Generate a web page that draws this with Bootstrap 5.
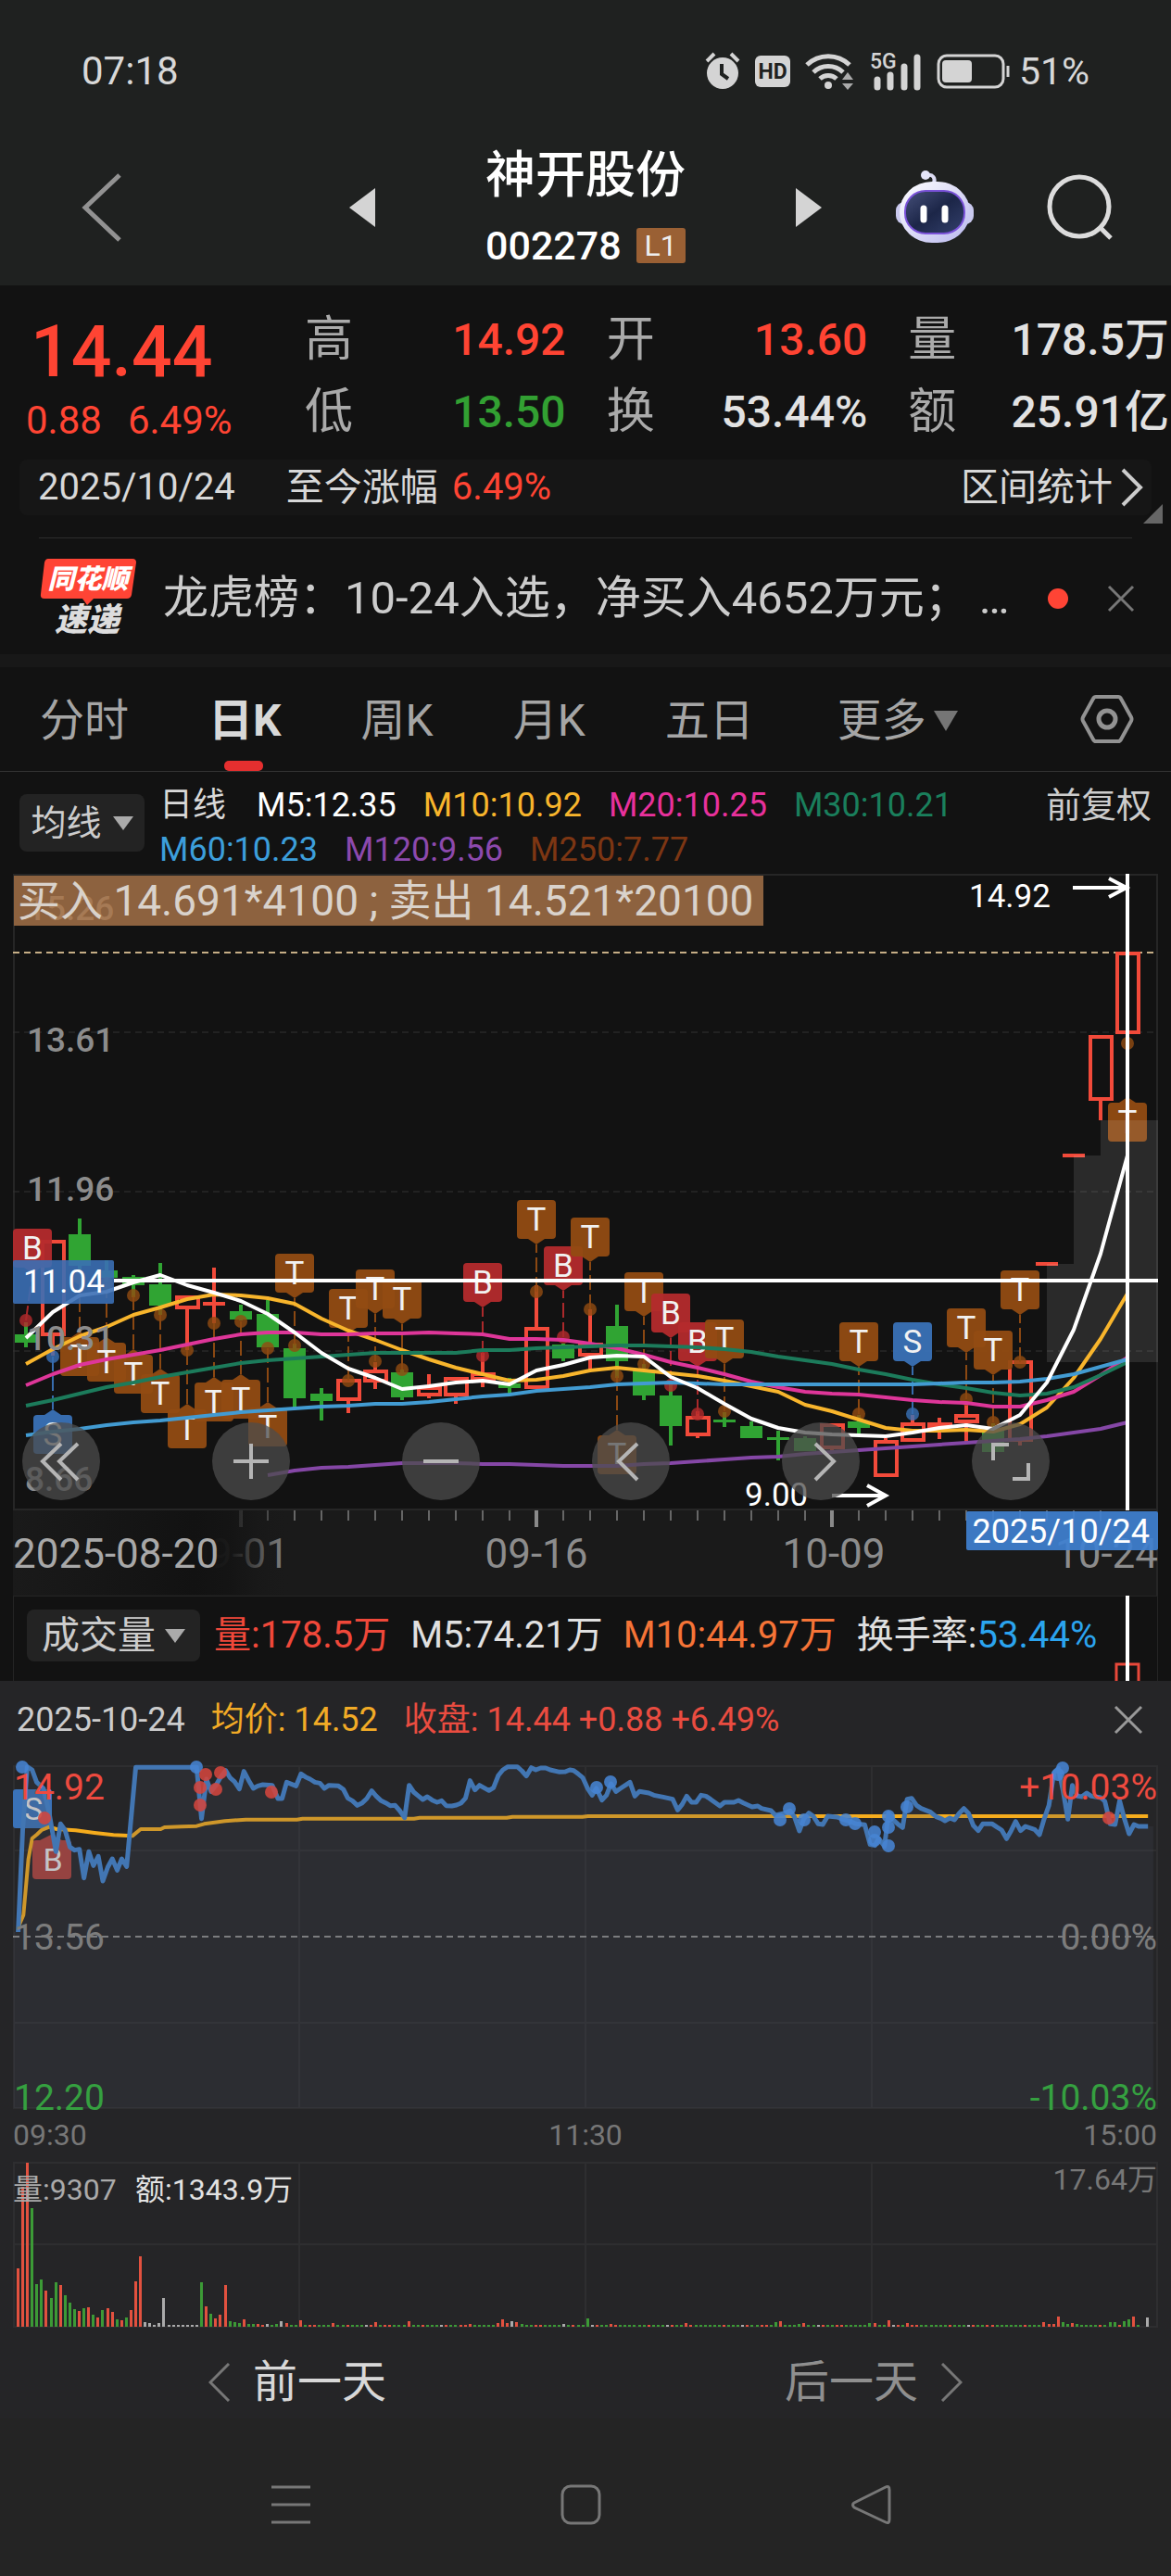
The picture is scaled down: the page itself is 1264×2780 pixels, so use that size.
<!DOCTYPE html>
<html lang="zh-CN" data-bs-theme="dark">
<head>
<meta charset="utf-8">
<meta name="viewport" content="width=device-width, initial-scale=1">
<title>神开股份 002278</title>
<link href="https://cdn.jsdelivr.net/npm/bootstrap@5.3.0/dist/css/bootstrap.min.css" rel="stylesheet">
<style>
body{background:#121212;color:#d8d8d8;font-family:Roboto,"Noto Sans CJK SC",sans-serif;overflow-x:hidden}
button{background:none;border:0;padding:0;color:inherit;font:inherit}
svg{display:block;flex:none}
svg text{font-family:Roboto,"Noto Sans CJK SC",sans-serif}
.up{color:#ff4433}.down{color:#32a032}
.top-area{background:#1f2120;padding-bottom:18px}
.status-row{padding:52px 88px 0;font-size:42px;line-height:50px;margin-bottom:56px}
.status-icons{gap:16px}
.battery-text{margin-left:-7px;font-size:41px}
.title-row{display:grid;grid-template-columns:1fr 510px 1fr}
.side-back{padding-left:88px}
.side-tools{padding:0 62px 0 79px}
.stock-name{font-size:54px;line-height:64px;margin-bottom:18px;color:#fff;font-weight:500}
.stock-code{font-size:43px;line-height:50px;color:#fff;font-weight:500}
.level-tag{background:#9a6034;font-size:32px;line-height:38px;width:53px;border-radius:3px;color:#eee;font-weight:400}
.price-box{width:329px;padding-top:8px}
.price-now{font-size:77px;line-height:88px;font-weight:500;padding-left:33px}
.price-chg{font-size:42px;line-height:60px;padding-left:28px}
.quote-area{padding-top:20px}
.quote-grid{display:grid;grid-template-columns:repeat(3,1fr);column-gap:44px;font-size:48px;line-height:77px;padding-right:2px;color:#e2e2e2;font-weight:500}
.quote-grid dt{font-weight:400;color:#aaa;font-size:52px}
.range-bar{margin:12px 21px 0;padding:0 8px 0 20px;background:#161616;border-radius:8px;font-size:40px;line-height:60px}
.range-bar .zh{font-size:41px}
.range-label{margin:0 15px 0 55px}
.corner{right:9px;bottom:-9px}
.hair{margin:24px 42px 0;border-top:1px solid #2d2d2d}
.news-row{padding:4px 39px 0 42px;height:125px}
.news-text{font-size:49px;line-height:60px;color:#ccc}
.news-close{margin-left:42px}
.strip{height:14px;background:#181818}
.tabs{height:113px;padding:0 40px 0 43px;border-bottom:1px solid #333;font-size:48px;line-height:60px;color:#a5a5a5}
.tabs a{color:inherit;text-decoration:none}
.tab-list{gap:86px;padding-top:4px}
.tab-on{color:#d8d8d8!important;font-weight:700}
.tab-on::after{content:"";position:absolute;left:17px;bottom:-24px;width:42px;height:11px;border-radius:5px;background:#e52f2f}
.legend-area{height:109px;padding:12px 21px 0}
.chip{background:#232323;border-radius:8px;color:#ccc}
.chip-ma{width:135px;height:62px;margin-top:12px;font-size:38px;gap:12px}
.legend-list{font-size:36px;line-height:48px;column-gap:29px;margin-left:16px;width:864px}
.c5{color:#fff}.c10{color:#f8b52c}.c20{color:#e8319c}.c30{color:#1a7f5c}.c60{color:#3c9edb}.c120{color:#8c49ad}.c250{color:#7d3613}
.adj{font-size:38px;line-height:48px;color:#ccc}
.tools{left:24px;right:131px;top:593px}
.tool{width:84px;height:84px;border-radius:50%;background:rgba(76,76,76,.75)}
.vol-head{margin:0 14px;border:solid #242424;border-width:1px 1px 0;height:92px;padding:14px 0 0 14px;font-size:40px;line-height:56px;color:#e0e0e0}
.vol-head .chip{width:187px;height:56px;font-size:41px;gap:10px;margin-right:15px}
.vol-vals{gap:22px}
.vol-cross{right:18px;top:-1px}
.sheet{background:#252527}
.sheet-head{height:76px;padding:8px 30px 0 18px;font-size:36px;column-gap:28px;color:#ccc}
.day-row{height:80px;font-size:48px;padding:2px 225px 0}
.day-row button{gap:24px}
.sys-nav{padding:68px 168px 52px 157px;background:#242424}
.sys-nav button{flex:1;height:50px}
</style>
</head>
<body>
<header class="top-area">
  <div class="status-row d-flex justify-content-between align-items-center">
    <span>07:18</span>
    <div class="status-icons d-flex align-items-center">
      <svg width="38" height="42" viewBox="0 0 38 42"><circle cx="19" cy="23" r="17" fill="#d4d4d4"/><path d="M2 10l8-8M36 10l-8-8" stroke="#d4d4d4" stroke-width="4"/><path d="M18 13v11l7 5" fill="none" stroke="#1f2120" stroke-width="4"/></svg>
      <svg width="38" height="34" viewBox="0 0 38 34"><rect width="38" height="34" rx="6" fill="#d4d4d4"/><text x="19" y="25" font-size="23" font-weight="700" text-anchor="middle" fill="#1f2120">HD</text></svg>
      <svg width="54" height="42" viewBox="0 0 54 42"><g fill="none" stroke="#d4d4d4" stroke-width="5"><path d="M2 14a33 33 0 0 1 46 0"/><path d="M9 22a23 23 0 0 1 32 0"/><path d="M16 29a13 13 0 0 1 18 0"/></g><circle cx="25" cy="36" r="4" fill="#d4d4d4"/><path d="M40 30l6-8 6 8zM40 34l6 7 6-7z" fill="#aaa"/></svg>
      <svg width="56" height="42" viewBox="0 0 56 42"><text x="0" y="18" font-size="23" font-weight="500" fill="#d4d4d4">5G</text><path d="M8 38V30M22 38V25M37 38V16M51 38V6" stroke="#d4d4d4" stroke-width="7" stroke-linecap="round"/></svg>
      <svg width="80" height="38" viewBox="0 0 80 38"><rect x="2" y="2" width="70" height="34" rx="9" fill="none" stroke="#d4d4d4" stroke-width="3"/><rect x="6" y="7" width="32" height="24" rx="4" fill="#d4d4d4"/><path d="M77 13v12" stroke="#d4d4d4" stroke-width="3"/></svg>
      <span class="battery-text">51%</span>
    </div>
  </div>
  <div class="title-row align-items-center">
    <div class="side-back"><button class="d-block" aria-label="返回"><svg width="46" height="76" viewBox="0 0 46 76"><path d="M41 3L4 38l37 35" fill="none" stroke="#929292" stroke-width="5"/></svg></button></div>
    <div class="d-flex justify-content-between align-items-center">
      <button aria-label="上一只"><svg width="28" height="42"><path d="M28 0v42L0 21z" fill="#d4d4d4"/></svg></button>
      <div>
        <div class="stock-name">神开股份</div>
        <div class="d-flex align-items-center gap-3"><span class="stock-code">002278</span><span class="level-tag text-center">L1</span></div>
      </div>
      <button aria-label="下一只"><svg width="28" height="42"><path d="M0 0v42l28-21z" fill="#d4d4d4"/></svg></button>
    </div>
    <div class="side-tools d-flex justify-content-between align-items-center">
      <button aria-label="智能助手"><svg width="86" height="80" viewBox="0 0 86 80">
        <defs><linearGradient id="rb" x1="0" y1="0" x2="1" y2="1"><stop offset="0" stop-color="#fff"/><stop offset="1" stop-color="#b9b8ee"/></linearGradient><linearGradient id="rf" x1="0" y1="0" x2="1" y2="1"><stop offset="0" stop-color="#46507a"/><stop offset=".5" stop-color="#1c2648"/><stop offset="1" stop-color="#33406c"/></linearGradient></defs>
        <path d="M42 14c2-6-1-10-7-9" fill="none" stroke="#dcdcf4" stroke-width="4"/><circle cx="33" cy="5" r="5" fill="#e4e4f8"/>
        <rect x="1" y="34" width="84" height="24" rx="9" fill="#c9c9ee"/>
        <rect x="5" y="12" width="76" height="66" rx="35" fill="url(#rb)"/>
        <rect x="11" y="22" width="64" height="46" rx="22" fill="url(#rf)" stroke="#7a52d8" stroke-width="2"/>
        <path d="M31 41v12M54 41v12" stroke="#fff" stroke-width="7" stroke-linecap="round"/></svg></button>
      <button aria-label="搜索"><svg width="72" height="72" viewBox="0 0 72 72"><circle cx="35" cy="35" r="32" fill="none" stroke="#dcdcdc" stroke-width="5"/><path d="M57 57l12 12" stroke="#dcdcdc" stroke-width="5"/></svg></button>
    </div>
  </div>
</header>

<section class="quote-area">
  <div class="d-flex">
    <div class="price-box up flex-shrink-0">
      <div class="price-now">14.44</div>
      <div class="price-chg d-flex"><span class="me-4">0.88</span><span class="ms-1">6.49%</span></div>
    </div>
    <dl class="quote-grid flex-fill mb-0">
      <div class="d-flex justify-content-between"><dt>高</dt><dd class="mb-0 up">14.92</dd></div>
      <div class="d-flex justify-content-between"><dt>开</dt><dd class="mb-0 up">13.60</dd></div>
      <div class="d-flex justify-content-between"><dt>量</dt><dd class="mb-0">178.5万</dd></div>
      <div class="d-flex justify-content-between"><dt>低</dt><dd class="mb-0 down">13.50</dd></div>
      <div class="d-flex justify-content-between"><dt>换</dt><dd class="mb-0">53.44%</dd></div>
      <div class="d-flex justify-content-between"><dt>额</dt><dd class="mb-0">25.91亿</dd></div>
    </dl>
  </div>
  <div class="position-relative">
    <div class="range-bar d-flex align-items-center">
      <span>2025/10/24</span><span class="zh range-label">至今涨幅</span><span class="up">6.49%</span>
      <button class="zh ms-auto d-flex align-items-center gap-2">区间统计<svg width="26" height="42" viewBox="0 0 26 42"><path d="M3 2l19 19L3 40" fill="none" stroke="#ccc" stroke-width="4"/></svg></button>
    </div>
    <svg class="corner position-absolute" width="21" height="21"><path d="M21 0v21H0z" fill="#666"/></svg>
  </div>
  <div class="hair"></div>
  <div class="news-row d-flex align-items-center">
    <svg width="106" height="92" viewBox="0 0 106 92"><path d="M10 3h91q4 0 4 4l-5 35q-1 4-5 4H59l-7 7-5-7H6q-5 0-4-5L6 7q1-4 4-4z" fill="#ff4435"/><text x="53" y="35" font-size="29" font-weight="900" font-style="italic" fill="#fff" text-anchor="middle">同花顺</text><text x="52" y="81" font-size="35" font-weight="900" font-style="italic" fill="#ddd" text-anchor="middle">速递</text></svg>
    <span class="news-text text-nowrap ms-4 flex-fill ps-1">龙虎榜：10-24入选，净买入4652万元；&thinsp;…</span>
    <svg width="22" height="22"><circle cx="11" cy="11" r="11" fill="#ff4435"/></svg>
    <button aria-label="关闭" class="news-close"><svg width="30" height="30"><path d="M2 2l26 26M28 2L2 28" stroke="#777" stroke-width="3"/></svg></button>
  </div>
</section>
<div class="strip"></div>

<nav class="tabs d-flex justify-content-between align-items-center">
  <div class="tab-list d-flex">
    <a href="#">分时</a><a href="#" class="tab-on position-relative">日K</a><a href="#">周K</a><a href="#">月K</a><a href="#">五日</a>
    <a href="#" class="d-flex align-items-center gap-2 ms-1">更多<svg width="26" height="22"><path d="M0 0h26L13 22z" fill="#757575"/></svg></a>
  </div>
  <button aria-label="设置"><svg width="58" height="54" viewBox="0 0 58 54"><path d="M17 3h24q2 0 3 2l11 20q1 2 0 4L44 49q-1 2-3 2H17q-2 0-3-2L3 29q-1-2 0-4L14 5q1-2 3-2z" fill="none" stroke="#929292" stroke-width="4"/><circle cx="29" cy="27" r="9" fill="none" stroke="#929292" stroke-width="5"/></svg></button>
</nav>

<section>
  <div class="legend-area d-flex align-items-start">
    <button class="chip chip-ma d-flex align-items-center justify-content-center flex-shrink-0">均线<svg width="22" height="15"><path d="M0 0h22L11 15z" fill="#aaa"/></svg></button>
    <div class="legend-list d-flex flex-wrap">
      <span class="me-1">日线</span><span class="c5">M5:12.35</span><span class="c10">M10:10.92</span><span class="c20">M20:10.25</span><span class="c30">M30:10.21</span><span class="c60">M60:10.23</span><span class="c120">M120:9.56</span><span class="c250">M250:7.77</span>
    </div>
    <button class="adj ms-auto">前复权</button>
  </div>
  <div class="position-relative">
    <svg id="kline" width="100%" viewBox="0 942 1264 780">
      <defs><linearGradient id="fade"><stop offset="0" stop-color="#1a1a1a"/><stop offset=".65" stop-color="#121212"/><stop offset=".78" stop-color="#141414" stop-opacity=".95"/><stop offset="1" stop-color="#1a1a1a" stop-opacity="0"/></linearGradient></defs>
      <rect x="14" y="1629" width="1236" height="93" fill="#1a1a1a"/>
      <path d="M14 944H1250M15 944V1629M1249 944V1722M14 1629H1250" stroke="#262626" stroke-width="2" fill="none"/>
      <path d="M14 1114H1250M14 1286H1250M14 1458H1250" stroke="#333" stroke-dasharray="7 5"/>
      <path d="M14 1028H1245" stroke="#c6ae86" stroke-width="2" stroke-dasharray="7 5"/>
      <g id="candles"></g>
      <g id="marks"></g>
      <path d="M1130 1470V1364H1159V1247H1188V1209H1250V1470Z" fill="#fff" fill-opacity=".1"/>
      <g id="mas" fill="none" stroke-width="4" stroke-linejoin="round"></g>
      <g font-size="37" fill="#8c8c8c" font-weight="500"><text x="29" y="1135">13.61</text><text x="29" y="1296">11.96</text><text x="29" y="1457">10.31</text><text x="27" y="1609">8.66</text></g>
      <rect x="15" y="945" width="809" height="54" fill="#8d623f"/>
      <text x="29" y="993" font-size="37" font-weight="500" fill="#a67a55">15.26</text>
      <text x="19" y="988" font-size="46" fill="#d9d2cb">买入 14.691*4100 ; 卖出 14.521*20100</text>
      <path d="M123 1382H1250" stroke="#fff" stroke-width="4"/>
      <path d="M1217 943V1630" stroke="#fff" stroke-width="4"/>
      <rect x="14" y="1360" width="109" height="47" rx="2" fill="#3b6fb5" fill-opacity=".9"/>
      <g font-size="35" fill="#fff"><text x="25" y="1395">11.04</text><text x="1046" y="979">14.92</text><text x="804" y="1625">9.00</text></g>
      <path d="M1158 958H1215M1197 948l19 10-19 10M898 1614H956M936 1603l20 11-20 11" stroke="#fff" stroke-width="4" fill="none"/>
      <g id="ticks"></g>
      <g font-size="44" fill="#8c8c8c"><text x="312" y="1692" text-anchor="end">09-01</text><text x="579" y="1692" text-anchor="middle">09-16</text><text x="900" y="1692" text-anchor="middle">10-09</text><text x="1250" y="1692" text-anchor="end">10-24</text></g>
      <rect x="15" y="1630" width="300" height="91" fill="url(#fade)"/>
      <text x="14" y="1692" font-size="44" fill="#a8a8a8">2025-08-20</text>
      <rect x="1043" y="1631" width="207" height="42" rx="2" fill="#4080d0" fill-opacity=".93"/>
      <text x="1241" y="1665" font-size="36" fill="#fff" text-anchor="end">2025/10/24</text>
    </svg>
    <div class="tools position-absolute d-flex justify-content-between">
      <button class="tool" aria-label="最左"><svg width="84" height="84"><path d="M42 23L22 42l20 20M60 23L40 42l20 20" fill="none" stroke="#b5b5b5" stroke-width="4"/></svg></button>
      <button class="tool" aria-label="放大"><svg width="84" height="84"><path d="M42 23v38M23 42h38" stroke="#b5b5b5" stroke-width="4"/></svg></button>
      <button class="tool" aria-label="缩小"><svg width="84" height="84"><path d="M23 42h38" stroke="#b5b5b5" stroke-width="4"/></svg></button>
      <button class="tool" aria-label="左移"><svg width="84" height="84"><path d="M49 23L29 42l20 20" fill="none" stroke="#b5b5b5" stroke-width="4"/></svg></button>
      <button class="tool" aria-label="右移"><svg width="84" height="84"><path d="M36 23l20 19-20 20" fill="none" stroke="#b5b5b5" stroke-width="4"/></svg></button>
      <button class="tool" aria-label="全屏"><svg width="84" height="84"><path d="M40 24H23v17M44 61h17V44" fill="none" stroke="#b5b5b5" stroke-width="4"/></svg></button>
    </div>
  </div>
  <div class="vol-head position-relative d-flex align-items-start">
    <button class="chip d-flex align-items-center justify-content-center flex-shrink-0">成交量<svg width="22" height="15"><path d="M0 0h22L11 15z" fill="#aaa"/></svg></button>
    <div class="vol-vals d-flex text-nowrap"><span style="color:#f0483a">量:178.5万</span><span>M5:74.21万</span><span style="color:#f67437">M10:44.97万</span><span>换手率:<span style="color:#2ba4ef">53.44%</span></span></div>
    <svg class="vol-cross position-absolute" width="28" height="92"><path d="M2 92V74h24v18" fill="none" stroke="#e8483a" stroke-width="3"/><path d="M14 0v92" stroke="#fff" stroke-width="4"/></svg>
  </div>
</section>

<section class="sheet">
  <div class="sheet-head d-flex align-items-center">
    <span>2025-10-24</span><span style="color:#f2ab26">均价: 14.52</span><span style="color:#ea4c40">收盘: 14.44 +0.88 +6.49%</span>
    <button class="ms-auto" aria-label="关闭"><svg width="32" height="32"><path d="M2 2l28 28M30 2L2 30" stroke="#999" stroke-width="3"/></svg></button>
  </div>
  <svg id="minute" width="100%" viewBox="0 1890 1264 640">
    <path d="M14 1906H1250M14 1997H1250M14 2183H1250M14 2275H1250M15 1906V2275M323 1906V2275M632 1906V2275M941 1906V2275M1249 1906V2275M14 2334H1250M14 2422H1250M15 2334V2511M323 2334V2511M632 2334V2511M941 2334V2511M1249 2334V2511M14 2511H1250" stroke="#2e2e30" stroke-width="2"/>
    <path d="M14 2090H1245" stroke="#8a8a8a" stroke-width="2" stroke-dasharray="7 5"/>
    <g font-size="34" fill="#e6e6e6" text-anchor="middle"><rect x="14" y="1931" width="42" height="42" rx="3" fill="#3a72b8"/><text x="36" y="1964">S</text><path d="M39 1986h4l12-6 12 6h6q4 0 4 4v34q0 4-4 4H39q-4 0-4-4v-34q0-4 4-4z" fill="#ac403a"/><text x="57" y="2019">B</text></g>
    <g id="prices" transform="translate(0 1860) scale(.40816 .33333)" fill="none" stroke-linejoin="round"></g>
    <g id="dots"></g>
    <g font-size="39"><text x="15" y="1942" fill="#ee4a3f">14.92</text><text x="1249" y="1942" fill="#ee4a3f" text-anchor="end">+10.03%</text><text x="15" y="2104" fill="#7c7c7c">13.56</text><text x="1249" y="2104" fill="#7c7c7c" text-anchor="end">0.00%</text><text x="15" y="2277" fill="#35a040">12.20</text><text x="1249" y="2277" fill="#35a040" text-anchor="end">-10.03%</text></g>
    <g font-size="32" fill="#777"><text x="14" y="2315">09:30</text><text x="632" y="2315" text-anchor="middle">11:30</text><text x="1249" y="2315" text-anchor="end">15:00</text><text x="1249" y="2363" text-anchor="end">17.64万</text></g>
    <g id="vols"></g>
    <g font-size="32"><text x="14" y="2374" fill="#aaa">量:9307</text><text x="146" y="2374" fill="#e2e2e2">额:1343.9万</text></g>
  </svg>
  <div class="day-row d-flex justify-content-between align-items-center">
    <button class="d-flex align-items-center"><svg width="24" height="42"><path d="M22 1L2 21l20 20" fill="none" stroke="#777" stroke-width="3"/></svg>前一天</button>
    <button class="d-flex align-items-center" style="color:#8f8f8f">后一天<svg width="24" height="42"><path d="M2 1l20 20L2 41" fill="none" stroke="#777" stroke-width="3"/></svg></button>
  </div>
  <footer class="sys-nav d-flex">
    <button class="d-flex justify-content-center align-items-center" aria-label="菜单"><svg width="44" height="44"><path d="M1 3h42M1 22h42M1 41h42" stroke="#777" stroke-width="3"/></svg></button>
    <button class="d-flex justify-content-center align-items-center" aria-label="主页"><svg width="44" height="44"><rect x="2" y="2" width="40" height="40" rx="9" fill="none" stroke="#777" stroke-width="3"/></svg></button>
    <button class="d-flex justify-content-center align-items-center" aria-label="后退"><svg width="44" height="44"><path d="M38 3q4-2 4 3v32q0 5-4 3L4 25q-3-3 0-5z" fill="none" stroke="#777" stroke-width="3"/></svg></button>
  </footer>
</section>

<script src="https://cdn.jsdelivr.net/npm/bootstrap@5.3.0/dist/js/bootstrap.bundle.min.js"></script>
<script>
const put = (id, html) => { document.getElementById(id).innerHTML = html; };
const cx = i => 28 + 29 * i;
const py = v => Math.round(1290 + v / 3);

// daily candles: colour, high, body top, body bottom, low
const candles = [
 ['g',1427,1440,1449,1454],['r',1338,1338,1442,1463],['g',1315,1332,1366,1370],['g',1360,1371,1379,1383],['g',1376,1378,1387,1400],['g',1363,1386,1409,1419],
 ['r',1398,1398,1413,1457],['r',1368,1405,1409,1428],['g',1408,1415,1424,1425],['g',1403,1418,1454,1454],['g',1450,1455,1509,1520],['g',1498,1504,1512,1533],
 ['r',1488,1488,1512,1525],['r',1470,1478,1492,1499],['g',1478,1481,1508,1511],['r',1483,1496,1507,1509],['r',1486,1486,1507,1515],['r',1460,1481,1490,1497],
 ['g',1487,1493,1498,1504],['r',1387,1432,1499,1499],['g',1450,1451,1466,1469],['r',1413,1449,1464,1478],['g',1408,1431,1469,1487],['g',1472,1478,1506,1511],
 ['g',1493,1506,1539,1560],['r',1523,1528,1550,1552],['g',1524,1532,1535,1540],['g',1534,1539,1552,1552],['g',1544,1551,1554,1576],['g',1550,1552,1566,1566],
 ['r',1536,1536,1564,1567],['g',1527,1534,1541,1547],['r',1552,1554,1594,1594],['r',1527,1535,1556,1556],['r',1530,1535,1541,1553],['r',1515,1526,1536,1557],
 ['g',1536,1543,1567,1567],['r',1468,1468,1556,1560],['r',1362,1362,1366,1366],['r',1245,1245,1249,1249],['r',1117,1117,1188,1209],['r',979,1027,1116,1116]];
put('candles', candles.map(([c,h,t,b,l],i) => {
  const x = cx(i);
  if (c === 'g') return `<path d="M${x} ${h}V${l}" stroke="#30a433" stroke-width="4"/><rect x="${x-12}" y="${t}" width="24" height="${b-t}" fill="#30a433"/>`;
  if (b - t < 6) return `<path d="M${x} ${h}V${l}" stroke="#f24a3a" stroke-width="4"/><rect x="${x-12}" y="${t}" width="24" height="4" fill="#f24a3a"/>`;
  return `<path d="M${x} ${h}V${t}M${x} ${b}V${l}" stroke="#f24a3a" stroke-width="4"/><rect x="${x-11}" y="${t+2}" width="23" height="${b-t-4}" fill="none" stroke="#f24a3a" stroke-width="4"/>`;
}).join(''));

// trade marks: letter, day, box top, dot
const tone = {T:'#934c12', B:'#b52b2d', S:'#3a72b8'};
const marks = [['B',0,108,405],['S',1,711,522],['T',2,458,267],['T',3,477,285],['T',4,516,325],['T',5,579,388],['T',6,693,502],['T',7,606,415],['T',8,597,408],['T',9,687,496],
 ['T',10,189,485],['T',12,303,600],['T',13,240,537],['T',14,273,565],['B',17,219,518],['T',19,15,312],['B',20,165,460],['T',21,72,370],['T',22,777,585],['T',23,249,547],
 ['B',24,318,615],['B',25,411,707],['T',26,402,698],['T',31,411,707],['S',33,411,708],['T',35,366,660],['T',36,438,735],['T',37,243,540],['T',41,-300,-492]];
put('marks', marks.map(([k,i,t,d]) => {
  const x = cx(i), bx = Math.max(x, 35), y = py(t), dy = py(d), below = dy < y, c = tone[k];
  const tip = below ? `M${bx-9} ${y}l9-6 9 6z` : `M${bx-9} ${y+42}l9 6 9-6z`;
  return `<g opacity=".94"><path d="M${x} ${dy}L${bx} ${below ? y-6 : y+48}" stroke="${c}" stroke-width="2" stroke-dasharray="16 5"/><circle cx="${x}" cy="${dy}" r="7" fill="${c}" opacity=".85"/><path d="${tip}" fill="${c}"/><rect x="${bx-21}" y="${y}" width="42" height="42" rx="4" fill="${c}"/><text x="${bx}" y="${y+33}" font-size="35" fill="#fff" text-anchor="middle">${k}</text></g>`;
}).join(''));

// moving averages
const mas = [
 ['#f8b52c',0,[545,498,455,425,388,362,337,320,325,332,350,400,437,468,502,532,558,580,601,597,585,567,558,567,575,586,600,618,636,677,700,725,752,762,761,758,766,742,688,590,465,318]],
 ['#de3699',0,[614,580,548,532,515,502,483,465,450,443,445,450,449,447,447,444,446,450,464,465,468,480,495,515,540,558,580,603,622,635,642,645,653,662,668,672,683,684,662,635,583,525]],
 ['#1c7b5b',0,[680,662,643,620,605,588,573,558,544,534,528,522,515,510,509,510,510,502,500,495,491,490,487,486,489,492,498,508,522,535,545,563,580,598,612,623,640,647,642,620,583,540]],
 ['#429bd2',0,[776,765,755,745,736,729,720,712,703,695,689,684,681,675,674,670,660,652,645,634,628,622,612,609,607,610,611,611,611,611,611,611,611,611,609,607,605,602,594,578,556,530]],
 ['#8547a6',9,[905,890,883,878,873,867,868,868,869,870,873,876,876,875,871,867,861,856,850,845,838,832,826,819,813,806,800,795,788,780,769,755,736]],
 ['#ffffff',0,[462,378,325,312,282,258,292,315,342,385,445,510,560,592,627,618,605,601,612,567,549,526,518,522,588,625,675,722,752,767,774,776,780,768,752,744,757,710,605,435,190,-129]]];
put('mas', mas.map(([c,s,v]) => `<polyline stroke="${c}" points="${v.map((n,i) => cx(i+s)+','+py(n)).join(' ')}"/>`).join(''));

let ticks = '';
for (let i = 8; i < 41; i++) {
  const big = (i - 8) % 11 === 0;
  ticks += `<path d="M${cx(i)} 1630V${big ? 1648 : 1641}" stroke="${big ? '#8a8a8a' : '#666'}" stroke-width="${big ? 4 : 2}"/>`;
}
put('ticks', ticks);

// one-day price line, morning and afternoon sessions
const am = [48,675,60,345,72,140,85,150,97,190,115,210,130,290,148,415,160,325,172,345,185,400,197,410,210,407,222,500,235,415,247,460,260,430,272,510,285,465,297,438,310,475,322,438,335,463,359,142,520,142,533,308,546,180,558,220,571,200,583,175,597,152,608,175,620,188,633,212,645,155,658,185,670,210,682,202,695,198,720,200,735,243,746,243,758,190,783,202,796,163,808,173,820,180,833,190,846,193,858,210,870,200,895,202,908,213,920,242,932,250,945,265,958,257,970,243,983,218,995,235,1008,250,1020,257,1032,266,1045,265,1057,282,1070,305,1082,200,1094,222,1107,235,1118,246,1130,237,1143,248,1156,255,1168,250,1180,266,1195,267,1207,264,1219,258,1231,242,1243,185,1256,215,1268,200,1280,208,1293,217,1305,208,1318,168,1330,150,1343,140,1368,140,1380,153,1392,170,1405,143,1417,150,1430,144,1443,144,1455,150,1480,157,1495,156,1507,150,1517,152];
const pm = [0,163,12,175,25,210,37,232,48,210,63,248,75,232,87,195,100,220,112,210,137,190,150,235,162,220,187,225,200,232,225,238,250,245,263,280,275,262,287,235,300,255,312,255,325,232,338,235,350,245,375,267,387,255,412,255,424,249,437,257,460,270,475,267,485,275,510,282,522,297,547,290,560,283,572,302,585,348,597,308,610,290,622,300,635,325,647,327,660,300,685,303,700,310,722,318,735,325,758,328,772,392,785,395,795,372,810,398,821,290,833,312,846,326,858,337,870,245,882,242,895,265,907,275,932,287,947,302,960,308,970,315,983,306,995,312,1008,290,1020,275,1033,292,1045,330,1058,347,1070,325,1095,325,1107,335,1120,345,1133,373,1145,347,1157,317,1170,347,1183,333,1207,343,1220,360,1232,310,1245,265,1258,160,1270,145,1282,215,1295,310,1307,200,1320,235,1332,237,1345,225,1357,235,1382,240,1393,252,1407,325,1420,327,1432,250,1445,310,1457,357,1470,327,1482,333,1507,333];
const line = am.concat(pm.map((n,i) => i % 2 ? n : n + 1529));
const avg = '48,660 62,620 75,440 85,372 97,360 110,345 130,335 150,342 200,346 250,354 300,361 350,364 372,342 425,342 435,336 480,334 520,332 540,325 595,316 650,311 785,311 800,308 1095,308 1110,305 1340,305 1355,302 1540,302 1555,300 3036,300';
put('prices', `<polyline points="${avg}" stroke="#f5ac1d" stroke-width="4" vector-effect="non-scaling-stroke"/>
<polygon points="36,1245 36,675 ${line.join(' ')} 3050,333 3050,1245" fill="#4a4f5a" fill-opacity=".22"/>
<polyline points="${line.join(' ')}" stroke="#4276b3" stroke-width="5" vector-effect="non-scaling-stroke"/>`);
const dotSet = {'#4784d3':[58,140,520,140,1577,207,1615,190,2062,312,2088,277,2126,313,2237,312,2262,323,2312,350,2312,378,2350,300,2350,335,2350,397,2399,270,2809,143,2797,165],
 '#d3453d':[545,165,582,160,528,207,570,213,530,265,718,222,118,305,2932,305]};
put('dots', Object.entries(dotSet).map(([c,a]) => { let s = ''; for (let i = 0; i < a.length; i += 2) s += `<circle cx="${Math.round(a[i]/2.45)}" cy="${Math.round(1860+a[i+1]/3)}" r="7" fill="${c}" opacity=".88"/>`; return s; }).join(''));

// per-minute volume: colour + height
const vol = 'r63 r151 r177 g128 g46 g51 r39 g31 g48 r45 g34 g26 g19 r17 g20 r21 g13 r10 g18 r20 r16 g8 r7 g10 r18 r49 r76 w5 w4 w2 w4 w31 w2 w2 w2 w2 w2 w2 w2 g48 r22 g14 r9 r13 r45 g6 g5 g4 r8 g3 g3 r3 r2 w3 g2 g3 w6 r4 g2 g2 r7'.split(' ');
const peaks = {67:'r4',76:'r5',83:'r6',96:'r3',102:'r4',103:'r8',104:'r4',105:'w6',106:'r5',107:'g3',116:'w3',121:'g9',126:'r3',142:'r4',161:'g5',162:'r6',166:'g3',167:'r4',181:'g4',182:'r4',185:'r7',189:'r4',218:'r5',219:'r3',220:'r3',221:'r11',222:'g5',223:'g3',224:'r4',225:'g3',232:'g5',233:'g5',234:'r2',235:'g6',236:'g8',237:'r11',238:'g2',239:'g0',240:'w10'};
const rest = 'ggrgggwggrrggrgg';
for (let i = 61; i <= 240; i++) vol.push(peaks[i] || rest[(i * 7) % 16] + '2');
const ink = {r:'#e2513f', g:'#3c9a36', w:'#aaaaaa'};
put('vols', vol.map((s,i) => { const h = +s.slice(1); return `<rect x="${Math.round(18+i*5.08)}" y="${2511-h}" width="3" height="${h}" fill="${ink[s[0]]}"/>`; }).join(''));
</script>
</body>
</html>
